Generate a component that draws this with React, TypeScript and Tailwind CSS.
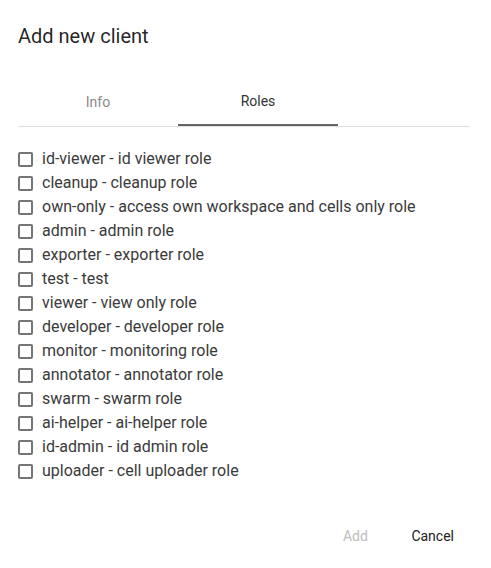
import React from "react";

const roles = [
  "id-viewer - id viewer role",
  "cleanup - cleanup role",
  "own-only - access own workspace and cells only role",
  "admin - admin role",
  "exporter - exporter role",
  "test - test",
  "viewer - view only role",
  "developer - developer role",
  "monitor - monitoring role",
  "annotator - annotator role",
  "swarm - swarm role",
  "ai-helper - ai-helper role",
  "id-admin - id admin role",
  "uploader - cell uploader role",
];

export default function App() {
  return (
    <div
      className="w-[491px] h-[568px] bg-white overflow-hidden flex flex-col"
      style={{ fontFamily: "Roboto, 'Liberation Sans', sans-serif" }}
    >
      <div className="pl-[18px] pt-[20px] h-[52px] text-[20px] leading-[32px] text-[rgba(0,0,0,0.87)]">
        Add new client
      </div>
      <div className="mt-[26px] ml-[18px] w-[452px] border-b border-[#e0e0e0] flex">
        <div className="w-[160px] h-[48px] flex items-center justify-center text-[14px] text-[#8a8a8a]">
          Info
        </div>
        <div className="w-[160px] h-[48px] flex items-center justify-center text-[14px] text-[#333] border-b-2 border-[#666] -mb-px">
          Roles
        </div>
      </div>
      <div className="mt-[20px] pl-[18px] flex flex-col">
        {roles.map((r) => (
          <label key={r} className="flex items-center h-[24px] cursor-pointer">
            <span className="w-[15px] h-[15px] border-2 border-[#757575] rounded-[2px] shrink-0" />
            <span className="ml-[9px] text-[16px] text-[#3a3a3a]">{r}</span>
          </label>
        ))}
      </div>
      <div className="mt-auto mb-[14px] flex justify-end items-center pr-[29px] gap-[16px]">
        <button className="w-[64px] h-[36px] text-[14px] text-[#bdbdbd]" disabled>
          Add
        </button>
        <button className="px-[8px] h-[36px] text-[14px] text-[#222]">Cancel</button>
      </div>
    </div>
  );
}
